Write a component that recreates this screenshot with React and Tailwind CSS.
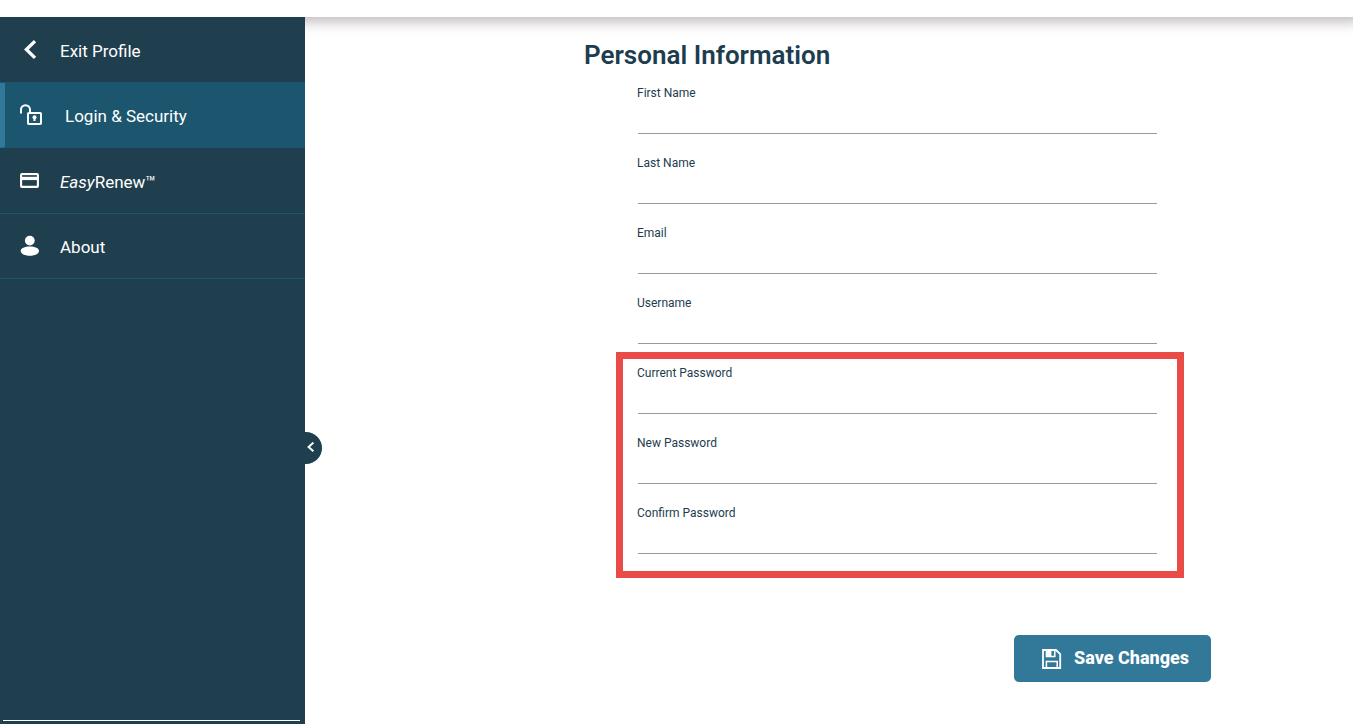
import React from "react";

function ChevronIcon() {
  return (
    <svg width="30" height="30" viewBox="0 0 30 30" fill="none" stroke="#fff" strokeWidth="3.3" aria-hidden="true">
      <path d="M20 7.1 L11.4 15.5 L20 23.9" />
    </svg>
  );
}

function UnlockIcon() {
  return (
    <svg width="30" height="30" viewBox="0 0 30 30" fill="none" stroke="#fff" strokeWidth="2" aria-hidden="true">
      <path d="M6 13.5V9.7a4.5 4.5 0 0 1 9 0V13" />
      <rect x="13" y="13" width="13" height="11" rx="0.8" />
      <circle cx="19.5" cy="17.3" r="2" fill="#fff" stroke="none" />
      <path d="M19.5 17.6v3.4" />
    </svg>
  );
}

function CardIcon() {
  return (
    <svg width="30" height="30" viewBox="0 0 30 30" fill="none" aria-hidden="true">
      <rect x="6.1" y="9.1" width="16.8" height="12.8" rx="0.8" stroke="#fff" strokeWidth="2.1" />
      <path d="M6 13.4h17" stroke="#fff" strokeWidth="3.4" />
      <path d="M7 10.9h15" stroke="#1f3e4e" strokeWidth="0.7" />
    </svg>
  );
}

function PersonIcon() {
  return (
    <svg width="30" height="30" viewBox="0 0 30 30" fill="#fff" aria-hidden="true">
      <circle cx="14.8" cy="9.6" r="4.9" />
      <path d="M5.7 19.9c0-2.6 4-4.4 9.1-4.4s9.2 1.8 9.2 4.4c0 2.5-4.2 4.9-9.2 4.9s-9.1-2.4-9.1-4.9z" />
    </svg>
  );
}

function SaveIcon() {
  return (
    <svg width="20" height="20" viewBox="0 0 20 20" fill="none" stroke="#fff" strokeWidth="1.8" aria-hidden="true">
      <path d="M1 1h13l4.2 4.2V19H1z" />
      <path d="M4.4 1v6.4h8.4V1" strokeWidth="1.5" />
      <path d="M4.4 1h5v6.2h-5z" fill="#fff" stroke="none" />
      <path d="M4.4 19v-6.6h10.8V19" strokeWidth="1.5" />
    </svg>
  );
}

const items = [
  { icon: <ChevronIcon />, label: "Exit Profile" },
  { icon: <UnlockIcon />, label: "Login & Security", active: true },
  { icon: <CardIcon />, label: <><em>Easy</em>Renew™</> },
  { icon: <PersonIcon />, label: "About" },
];

function Field({ id, label, type = "text" }) {
  return (
    <div className="flex flex-col">
      <label htmlFor={id} className="text-[12px] leading-4">{label}</label>
      <input
        id={id}
        type={type}
        className="ml-px h-[33px] border-b border-[#999] bg-transparent text-sm outline-none"
      />
    </div>
  );
}

export default function App() {
  return (
    <div className="flex min-h-screen flex-col bg-white font-['Roboto',sans-serif] text-[#1d3d4f]">
      <header className="z-0 h-[17px] bg-white shadow-[0_-4px_14px_8px_rgba(60,45,60,0.36)]" />
      <div className="flex flex-1">
        <aside className="relative z-10 flex w-[305px] shrink-0 flex-col bg-[#1f3e4e] text-white">
          <nav className="grid h-[262px] grid-rows-4">
            {items.map((item, i) => (
              <a
                key={i}
                href="#"
                aria-current={item.active ? "page" : undefined}
                className={
                  item.active
                    ? "flex items-center gap-[15px] border-b border-l-[5px] border-b-[#1c566e] border-l-[#32789a] bg-[#1c566e] px-[15px] text-[17px]"
                    : "flex items-center gap-[15px] border-b border-[#1c566e] px-[15px] text-[17px]"
                }
              >
                <span className={item.active ? "-ml-[5px] mr-[5px]" : ""}>{item.icon}</span>
                <span className="pt-1">{item.label}</span>
              </a>
            ))}
          </nav>
          <hr className="mt-auto mr-[5px] mb-[3px] ml-[3px] border-white" />
          <button
            type="button"
            aria-label="Collapse menu"
            className="absolute top-[415px] left-full flex h-8 w-[17px] items-center rounded-r-full bg-[#1f3e4e]"
          >
            <svg width="12" height="12" viewBox="0 0 12 12" fill="none" stroke="#fff" strokeWidth="2" aria-hidden="true">
              <path d="M8.4 0.6 L3.6 4.9 L8.4 9.2" />
            </svg>
          </button>
        </aside>
        <main className="flex flex-1 justify-center pt-5 pl-[136px]">
          <form className="w-full max-w-[628px]">
            <h1 className="pl-px text-[26px] leading-9 font-semibold">Personal Information</h1>
            <div className="flex flex-col gap-[21px] px-[54px] pt-3">
              <Field id="first-name" label="First Name" />
              <Field id="last-name" label="Last Name" />
              <Field id="email" label="Email" type="email" />
              <Field id="username" label="Username" />
            </div>
            <div className="mt-2 mr-[27px] ml-[33px] border-[7px] border-[#e94b46] pt-[6px] pr-5 pb-[17px] pl-[14px]">
              <div className="flex flex-col gap-[21px]">
                <Field id="current-password" label="Current Password" type="password" />
                <Field id="new-password" label="New Password" type="password" />
                <Field id="confirm-password" label="Confirm Password" type="password" />
              </div>
            </div>
            <div className="mt-[57px] flex justify-end">
              <button
                type="button"
                className="flex h-[47px] items-center gap-3 rounded-[5px] bg-[#327899] pr-[22px] pl-7 text-[18px] font-extrabold text-white"
              >
                <SaveIcon />
                <span className="pb-[3px]">Save Changes</span>
              </button>
            </div>
          </form>
        </main>
      </div>
    </div>
  );
}
